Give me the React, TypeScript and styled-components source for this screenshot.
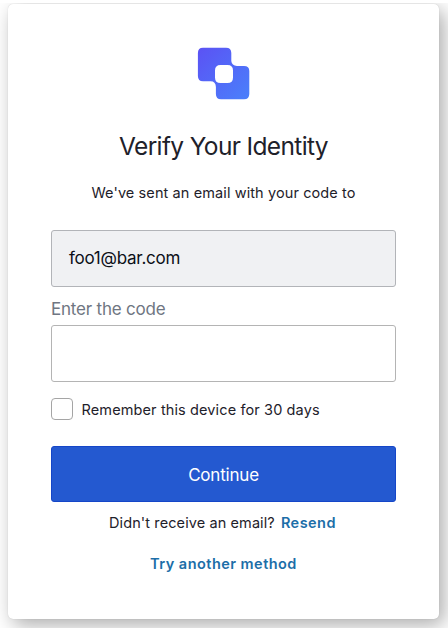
import React from "react";
import styled, { createGlobalStyle } from "styled-components";

const GlobalStyle = createGlobalStyle`
  * { box-sizing: border-box; }
  html, body { margin: 0; background: #fff; overflow: hidden; }
  body { font-family: Inter, "Liberation Sans", sans-serif; color: #1e212a; }
`;

const Page = styled.main`
  height: 628px;
  padding: 4px 8px 0;
  clip-path: inset(3px 0 0 0);
`;

const Card = styled.section`
  width: 431px;
  height: 615px;
  padding: 43px 43px 0;
  border-radius: 5px;
  background: #fff;
  box-shadow: 5px 6px 20px rgba(0, 0, 0, 0.33), 0 0 1px rgba(0, 0, 0, 0.2);
  display: flex;
  flex-direction: column;
`;

const Logo = styled.svg`
  display: block;
  width: 54px;
  height: 54px;
  margin: 0 auto;
`;

const Title = styled.h1`
  margin: 28px 0 0;
  font-size: 24.5px;
  font-weight: 400;
  line-height: 34px;
  letter-spacing: -0.64px;
  text-align: center;
`;

const Text = styled.p<{ $top: number }>`
  margin: ${(p) => p.$top}px 0 0;
  font-size: 14.5px;
  line-height: 20px;
  letter-spacing: 0.1px;
  text-align: center;
  white-space: nowrap;
`;

const ResendText = styled(Text)`
  padding-right: 2px;
`;

const Email = styled.div`
  height: 57px;
  margin-top: 27px;
  padding: 0 17px;
  border: 1px solid #b2b4b8;
  border-radius: 3px;
  background: #f0f1f3;
  color: #0c0f18;
  font-size: 17px;
  line-height: 55px;
  letter-spacing: -0.25px;
  width: 345px;
`;

const Label = styled.label`
  margin-top: 11px;
  color: #6f7682;
  font-size: 17px;
  line-height: 22px;
  letter-spacing: -0.2px;
`;

const CodeInput = styled.input`
  width: 345px;
  height: 57px;
  margin-top: 5px;
  padding: 0 17px;
  border: 1px solid #b4b4b4;
  border-radius: 3px;
  background: #fff;
  font: 17px Inter, sans-serif;
  outline: none;
`;

const Remember = styled.label`
  display: flex;
  align-items: center;
  gap: 8.5px;
  height: 22px;
  margin-top: 16px;
  font-size: 14.5px;
  letter-spacing: 0.12px;
  white-space: nowrap;
`;

const Checkbox = styled.input`
  appearance: none;
  width: 22px;
  height: 22px;
  margin: 0;
  border: 1px solid #a5a5a5;
  border-radius: 4px;
  background: #fff;
`;

const Button = styled.button`
  width: 345px;
  height: 56px;
  margin-top: 26px;
  padding: 2px 0 0;
  border: 1px solid #1546c8;
  border-radius: 3px;
  background: #2459d0;
  color: #fff;
  font: 17px Inter, sans-serif;
  letter-spacing: -0.2px;
`;

const Link = styled.a`
  color: #1c6ea8;
  font-weight: 600;
  letter-spacing: 0.46px;
  text-decoration: none;
`;

const ResendLink = styled(Link)`
  margin-left: 6px;
`;

export default function App() {
  return (
    <>
      <GlobalStyle />
      <Page>
        <Card>
          <Logo viewBox="0 0 54 54" aria-hidden="true">
            <defs>
              <linearGradient id="brand" x1="0" y1="0" x2="1" y2="1">
                <stop offset="0" stopColor="#5b52f4" />
                <stop offset="1" stopColor="#4a80fb" />
              </linearGradient>
            </defs>
            <path
              fill="url(#brand)"
              fillRule="evenodd"
              d="M6 .7H29Q34.3.7 34.3 6V14Q34.8 18.7 40 18.9H47Q52.3 18.9 52.3 24V47Q52.3 52.3 47 52.3H24Q18.9 52.3 18.9 47V40Q18.7 34.3 13.5 34.3H6Q.9 34.3.9 29V6Q.9.7 6 .7ZM23.5 18Q18 18 18 23.5V30.5Q18 36 23.5 36H30.5Q36 36 36 30.5V23.5Q36 18 30.5 18Z"
            />
          </Logo>
          <Title>Verify Your Identity</Title>
          <Text $top={20}>We've sent an email with your code to</Text>
          <Email>foo1@bar.com</Email>
          <Label htmlFor="code">Enter the code</Label>
          <CodeInput id="code" />
          <Remember>
            <Checkbox type="checkbox" />
            Remember this device for 30 days
          </Remember>
          <Button>Continue</Button>
          <ResendText $top={11}>
            Didn't receive an email?
            <ResendLink>Resend</ResendLink>
          </ResendText>
          <Text $top={21}>
            <Link>Try another method</Link>
          </Text>
        </Card>
      </Page>
    </>
  );
}
